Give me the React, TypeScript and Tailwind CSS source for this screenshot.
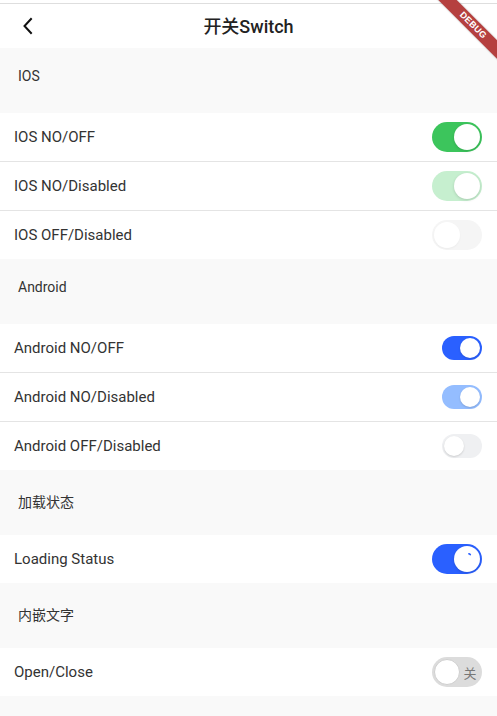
import React from "react";

type Kind = "ios" | "android" | "loading" | "text";

function Toggle({ kind, on, disabled }: { kind: Kind; on: boolean; disabled?: boolean }) {
  if (kind === "ios") {
    const track = on ? (disabled ? "bg-[#c6efcf]" : "bg-[#3cc55c]") : "bg-[#f5f5f5]";
    return (
      <div className={`w-[50px] h-[30px] rounded-full p-[2px] flex ${on ? "justify-end" : "justify-start"} ${track}`}>
        <div className={`w-[26px] h-[26px] rounded-full bg-white ${disabled && !on ? "shadow-[0_1px_2px_rgba(0,0,0,0.04)]" : "shadow-[0_1px_3px_rgba(0,0,0,0.15)]"}`} />
      </div>
    );
  }
  if (kind === "android") {
    const track = on ? (disabled ? "bg-[#94bdff]" : "bg-[#2a60ff]") : "bg-[#eff0f2]";
    return (
      <div className={`w-[40px] h-[24px] rounded-full p-[2px] flex ${on ? "justify-end" : "justify-start"} ${track}`}>
        <div className="w-[20px] h-[20px] rounded-full bg-white shadow-[0_1px_2px_rgba(0,0,0,0.15)]" />
      </div>
    );
  }
  if (kind === "loading") {
    return (
      <div className="w-[50px] h-[30px] rounded-full p-[2px] flex justify-end bg-[#2a60ff]">
        <div className="w-[26px] h-[26px] rounded-full bg-white flex items-center justify-center shadow-[0_1px_3px_rgba(0,0,0,0.15)]">
          <svg width="14" height="14" viewBox="0 0 14 14">
            <path d="M7 1.5 A5.5 5.5 0 0 1 8.6 1.7" stroke="#2a60ff" strokeWidth="1.6" fill="none" strokeLinecap="round" transform="rotate(20 7 7)" />
          </svg>
        </div>
      </div>
    );
  }
  return (
    <div className="w-[50px] h-[30px] rounded-full p-[2px] flex items-center bg-[#dcdcdc]">
      <div className="w-[26px] h-[26px] rounded-full bg-white border border-[#cfcfcf]" />
      <span className="flex-1 text-center text-[13px] text-[#777] leading-none" style={{ fontFamily: '"Noto Sans CJK SC", sans-serif' }}>关</span>
    </div>
  );
}

function Section({ title, cjk }: { title: string; cjk?: boolean }) {
  return (
    <div className={`h-[65px] bg-[#f9f9f9] pl-[18px] ${cjk ? "pt-[22px]" : "pt-[18px]"} text-sm leading-5 text-[#333]`}>{title}</div>
  );
}

function Row({ label, kind, on, disabled, last }: { label: string; kind: Kind; on: boolean; disabled?: boolean; last?: boolean }) {
  return (
    <div className={`bg-white h-[48px] ${last ? "" : "box-content border-b border-[#e4e4e4]"}`}>
      <div className="h-[48px] flex items-center justify-between pl-[14px] pr-[15px]">
        <span className="text-[15px] text-[#333]">{label}</span>
        <Toggle kind={kind} on={on} disabled={disabled} />
      </div>
    </div>
  );
}

export default function App() {
  return (
    <div
      className="relative w-[497px] h-[716px] overflow-hidden bg-[#f9f9f9]"
      style={{ fontFamily: 'Roboto, "Noto Sans CJK SC", sans-serif' }}
    >
      <div className="h-[3px] bg-white" />
      <div className="h-[45px] bg-white border-t border-[#dedede] relative flex items-center justify-center">
        <svg className="absolute left-[22px] top-[13px]" width="12" height="18" viewBox="0 0 12 18">
          <path d="M9 2 L2.5 9 L9 16" stroke="#111" strokeWidth="2" fill="none" strokeLinecap="square" />
        </svg>
        <span className="text-[18px] font-medium text-[#222] pt-[1px]">开关Switch</span>
      </div>

      <Section title="IOS" />
      <Row label="IOS NO/OFF" kind="ios" on />
      <Row label="IOS NO/Disabled" kind="ios" on disabled />
      <Row label="IOS OFF/Disabled" kind="ios" on={false} disabled last />

      <Section title="Android" />
      <Row label="Android NO/OFF" kind="android" on />
      <Row label="Android NO/Disabled" kind="android" on disabled />
      <Row label="Android OFF/Disabled" kind="android" on={false} disabled last />

      <Section title="加载状态" cjk />
      <Row label="Loading Status" kind="loading" on last />

      <Section title="内嵌文字" cjk />
      <Row label="Open/Close" kind="text" on={false} last />

      <div className="absolute left-[408px] top-[19px] w-[130px] h-[13px] rotate-45 bg-[#b5403f] flex items-center justify-center shadow-[0_0_2px_rgba(0,0,0,0.3)]">
        <span className="text-white text-[9px] font-bold leading-none tracking-[0.3px]" style={{ fontFamily: '"Liberation Sans", sans-serif' }}>DEBUG</span>
      </div>
    </div>
  );
}
